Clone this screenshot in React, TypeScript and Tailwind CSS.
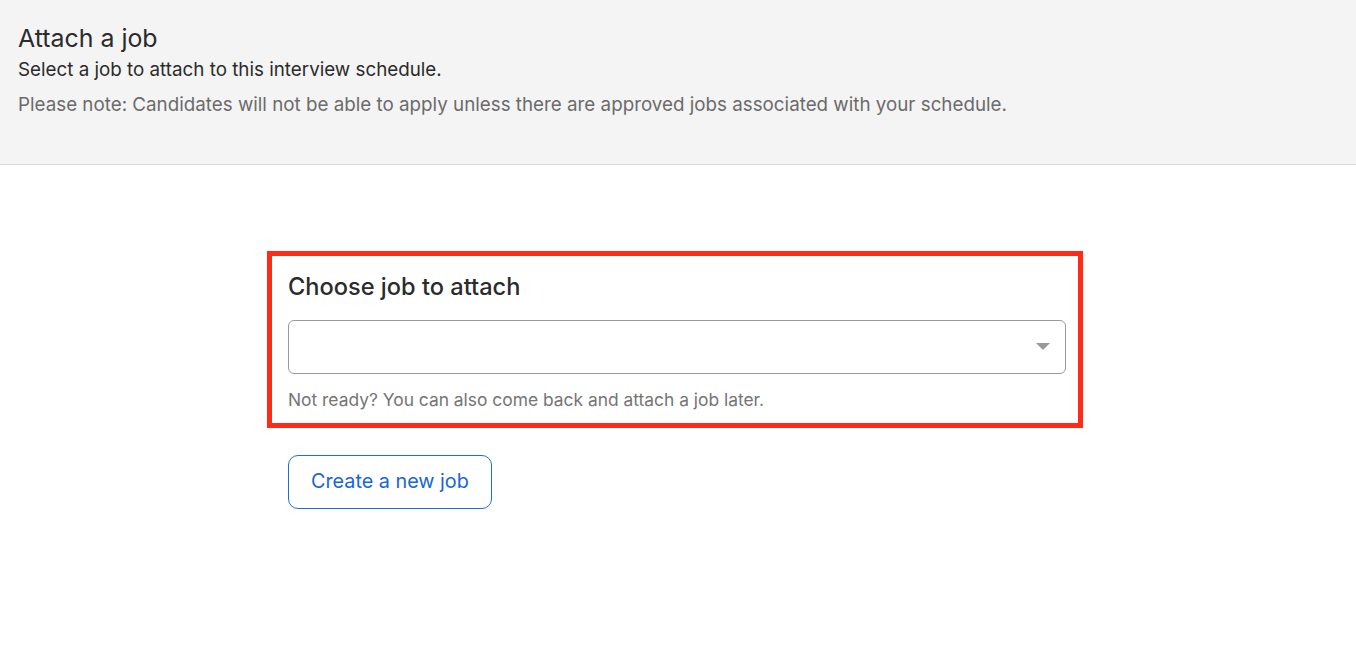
export default function App() {
  return (
    <div className="min-h-[650px] w-full bg-white font-['Inter',sans-serif] text-[#2b2b2b]">
      {/* header */}
      <div className="h-[165px] border-b border-[#dcdcdc] bg-[#f4f4f4] px-[18px] pt-[23px]">
        <h1 className="text-[24.9px] leading-[30px] text-[#2b2b2b]">Attach a job</h1>
        <p className="mt-[5px] text-[18.8px] leading-[24px] text-[#2b2b2b]">
          Select a job to attach to this interview schedule.
        </p>
        <p className="mt-[11px] text-[18.8px] leading-[24px] text-[#6b6b6b]">
          Please note: Candidates will not be able to apply unless there are approved jobs associated with your schedule.
        </p>
      </div>

      {/* body */}
      <div className="pl-[267px] pt-[86px]">
        <div className="w-[816px] border-[5px] border-[#ff2b17] pb-[12px] pl-[16px] pr-[12px] pt-[17px]">
          <h2 className="text-[23.6px] font-medium leading-[28px] text-[#2b2b2b]">Choose job to attach</h2>
          <div className="mt-[19px] flex h-[54px] items-center justify-end rounded-[6px] border border-[#9a9a9a] bg-white pr-[15px]">
            <svg width="14" height="8" viewBox="0 0 14 8">
              <path d="M0 0 L14 0 L7 7 Z" fill="#999999" />
            </svg>
          </div>
          <p className="mt-[15px] text-[17.4px] leading-[22px] text-[#757575]">
            Not ready? You can also come back and attach a job later.
          </p>
        </div>

        <button className="ml-[21px] mt-[27px] h-[54px] rounded-[10px] border border-[#1a6fe0] bg-white px-[22px] text-[19.8px] text-[#1766d6]">
          Create a new job
        </button>
      </div>
    </div>
  );
}
